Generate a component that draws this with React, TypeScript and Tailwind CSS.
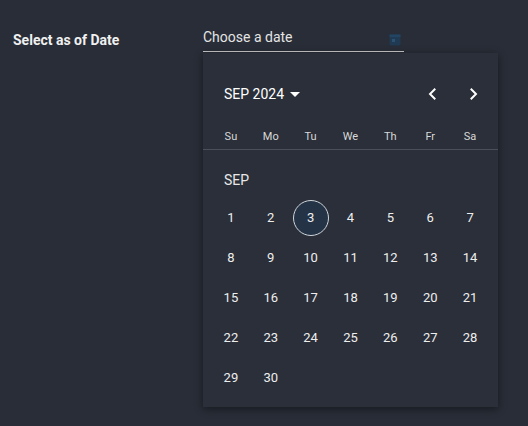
import React from "react";

export default function App() {
  const days = ["Su", "Mo", "Tu", "We", "Th", "Fr", "Sa"];
  const rows: number[][] = [];
  const nums = Array.from({ length: 30 }, (_, i) => i + 1);
  for (let i = 0; i < nums.length; i += 7) rows.push(nums.slice(i, i + 7));
  return (
    <div className="w-[528px] h-[426px] bg-[#282d37] text-white overflow-hidden" style={{ fontFamily: "Roboto, sans-serif" }}>
      <div className="flex pt-[22px]">
        <div className="w-[203px] pl-[13px] pt-[8px] text-[14px] font-bold text-[#f0f0f0]">Select as of Date</div>
        <div className="flex flex-col">
          <div className="w-[201px] h-[30px] border-b border-[#c8c8c8] flex items-start justify-between">
            <span className="text-[14px] text-[#e4e4e4] pt-[5px]">Choose a date</span>
            <svg width="12" height="13" viewBox="0 0 12 13" className="mt-[11px] mr-[3px]">
              <rect x="0.5" y="1.5" width="11" height="11" rx="1" fill="#1f3a52" />
              <rect x="0.5" y="1.5" width="11" height="2.5" fill="#234563" />
              <rect x="3" y="6" width="3" height="3" fill="#2c5173" />
            </svg>
          </div>
          <div className="w-[295px] h-[354px] bg-[#2a2f39] shadow-[0_2px_8px_rgba(0,0,0,0.45)] mt-[1px] flex flex-col">
            <div className="flex items-center justify-between h-[78px] pl-[21px] pr-[16px] pt-[4px]">
              <div className="flex items-center text-[14px] text-white">
                SEP 2024
                <svg width="10" height="5" viewBox="0 0 10 5" className="ml-[6px] mt-[1px]"><path d="M0 0h10L5 5z" fill="#fff" /></svg>
              </div>
              <div className="flex items-center gap-[22px]">
                <svg width="18" height="18" viewBox="0 0 24 24"><path d="M15 5l-7 7 7 7" stroke="#fff" strokeWidth="2.6" fill="none" /></svg>
                <svg width="18" height="18" viewBox="0 0 24 24"><path d="M9 5l7 7-7 7" stroke="#fff" strokeWidth="2.6" fill="none" /></svg>
              </div>
            </div>
            <div className="grid grid-cols-7 px-[8px] h-[13px] items-center -mt-[2px]">
              {days.map((d) => (
                <div key={d} className="text-center text-[11px] text-[#d8d8d8]">{d}</div>
              ))}
            </div>
            <div className="h-px bg-[#4a4f58] mt-[7px]" />
            <div className="pl-[21px] pt-[20px] text-[14px] text-[#e8e8e8] h-[48px]">SEP</div>
            <div className="px-[8px] flex flex-col">
              {rows.map((r, ri) => (
                <div key={ri} className="grid grid-cols-7 h-[40px]">
                  {r.map((n) => (
                    <div key={n} className="flex items-center justify-center">
                      <div className={`w-[36px] h-[36px] rounded-full flex items-center justify-center text-[13px] text-[#eeeeee] ${n === 3 ? "bg-[#243446] border border-[#cfd4da]" : ""}`}>{n}</div>
                    </div>
                  ))}
                </div>
              ))}
            </div>
          </div>
        </div>
      </div>
    </div>
  );
}
